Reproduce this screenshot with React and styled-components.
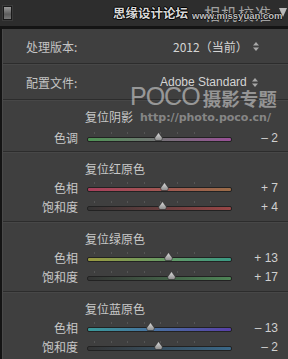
import React from 'react';
import styled, { createGlobalStyle } from 'styled-components';

const GlobalStyle = createGlobalStyle`
  html, body {
    margin: 0;
    padding: 0;
    background: #3f3f3f;
    overflow: hidden;
  }
`;

const FONT = `"Noto Sans CJK SC", "Noto Sans", "Liberation Sans", sans-serif`;

// 面板外框

const Panel = styled.div`
  position: relative;
  width: 288px;
  height: 359px;
  overflow: hidden;
  background: #3f3f3f;
  font-family: ${FONT};
  color: #c9c9c9;
`;

const Header = styled.div`
  height: 26px;
  background: #2d2d2d;
  border-bottom: 3px solid #141414;
  display: flex;
  align-items: center;
  padding-left: 3px;
  position: relative;
`;

const Toggle = styled.div`
  width: 7px;
  height: 12px;
  border: 1px solid #1a1a1a;
  background: linear-gradient(#9a9a9a, #5c5c5c 60%, #777);
  box-shadow: 0 0 0 1px #3a3a3a;
`;

const SiteMark = styled.div`
  position: absolute;
  left: 113px;
  top: 5px;
  font-size: 12.5px;
  line-height: 16px;
  font-weight: 700;
  color: #d8d8d8;
  white-space: nowrap;
  text-shadow: -1px 0 #000, 1px 0 #000, 0 -1px #000, 0 1px #000;
`;

const PanelTitle = styled.div`
  position: absolute;
  left: 204px;
  top: 2px;
  font-size: 16px;
  line-height: 22px;
  color: #a0a0a0;
  letter-spacing: 1px;
  white-space: nowrap;
`;

const SiteUrl = styled.div`
  position: absolute;
  left: 192px;
  top: 10px;
  font-family: "Liberation Sans", sans-serif;
  font-size: 9.5px;
  line-height: 11px;
  font-weight: 700;
  color: #bdbdbd;
  white-space: nowrap;
  text-shadow: -1px 0 #111, 1px 0 #111, 0 -1px #111, 0 1px #111;
`;

const Arrow = styled.div`
  position: absolute;
  right: 1px;
  top: 8px;
  width: 0;
  height: 0;
  border-left: 4px solid transparent;
  border-right: 4px solid transparent;
  border-top: 9px solid #b8b8b8;
`;

const Body = styled.div`
  border-left: 2px solid #141414;
  box-shadow: inset 1px 0 0 #4a4a4a;
`;

const Divider = styled.div`
  height: 1px;
  background: #2c2c2c;
  border-bottom: 1px solid #474747;
  margin-left: 1px;
`;

// 设置行

const SettingRow = styled.div`
  height: ${p => p.$h}px;
  display: flex;
  align-items: center;
  padding-left: 24px;
  font-size: 12px;
`;

const SettingLabel = styled.div`
  width: ${p => p.$w}px;
  color: #c4c4c4;
`;

const SettingValue = styled.div`
  display: flex;
  align-items: center;
  gap: 5px;
  color: #d4d4d4;
  font-family: ${p => (p.$latin ? `"Liberation Sans", sans-serif` : FONT)};
`;

const Stepper = styled.svg`
  width: 6px;
  height: 9px;
  flex: none;
`;

// 滑块组

const Group = styled.div`
  padding: 7px 0 ${p => p.$pb}px;
`;

const GroupTitle = styled.div`
  height: 18px;
  line-height: 18px;
  padding-left: 83px;
  font-size: 12px;
  color: #c8c8c8;
`;

const SliderRow = styled.div`
  height: 19px;
  display: grid;
  grid-template-columns: 76px 145px 1fr;
  column-gap: 9px;
  align-items: center;
  margin-top: ${p => p.$mt || 0}px;
`;

const RowLabel = styled.div`
  text-align: right;
  font-size: 12px;
  color: #c8c8c8;
`;

const Track = styled.div`
  position: relative;
  height: 3px;
  border: 1px solid #222;
  border-radius: 2px;
  background: linear-gradient(to right, ${p => p.$from}, ${p => p.$to});
  margin-top: 3px;
`;

const Ticks = styled.div`
  position: absolute;
  left: 6px;
  right: 6px;
  top: -6px;
  height: 2px;
  background: repeating-linear-gradient(
    to right,
    #555 0 1px,
    transparent 1px 16.6px
  );
`;

const Thumb = styled.svg`
  position: absolute;
  top: -6px;
  width: 9px;
  height: 9px;
  margin-left: -4.5px;
`;

const Value = styled.div`
  text-align: right;
  padding-right: 10px;
  font-family: "Liberation Sans", sans-serif;
  font-size: 12px;
  color: #d0d0d0;
  white-space: pre;
`;

// 水印

const Watermark = styled.div`
  position: absolute;
  left: 130px;
  top: 84px;
  pointer-events: none;
  white-space: nowrap;
`;

const PocoLine = styled.div`
  display: flex;
  align-items: center;
  gap: 3px;
  height: 24px;
`;

const PocoWord = styled.span`
  font-family: "Liberation Sans", sans-serif;
  font-size: 25px;
  line-height: 24px;
  letter-spacing: -1px;
  color: rgba(230, 230, 230, 0.55);
`;

const PocoTitle = styled.span`
  font-size: 18.5px;
  font-weight: 700;
  line-height: 24px;
  margin-top: 4px;
  color: rgba(235, 235, 235, 0.5);
`;

const PocoUrl = styled.div`
  margin-left: 10px;
  margin-top: 4px;
  font-family: "DejaVu Sans", sans-serif;
  font-weight: 700;
  font-size: 11px;
  line-height: 12px;
  color: rgba(225, 225, 225, 0.45);
`;

const StepperIcon = () => (
  <Stepper viewBox="0 0 6 9">
    <path d="M3 0 L6 3.5 H0 Z" fill="#a8a8a8" />
    <path d="M3 9 L6 5.5 H0 Z" fill="#a8a8a8" />
  </Stepper>
);

const Slider = ({ label, value, from, to, mt }) => {
  const pct = 50 + value / 2;
  const sign = value > 0 ? '+' : value < 0 ? '–' : '';
  return (
    <SliderRow $mt={mt}>
      <RowLabel>{label}</RowLabel>
      <Track $from={from} $to={to}>
        <Ticks />
        <Thumb viewBox="0 0 9 9" style={{ left: `${pct}%` }}>
          <defs>
            <linearGradient id="tg" x1="0" y1="0" x2="0" y2="1">
              <stop offset="0" stopColor="#e0e0e0" />
              <stop offset="1" stopColor="#8a8a8a" />
            </linearGradient>
          </defs>
          <path d="M4.5 0.5 L8.5 6 L7.5 8.5 H1.5 L0.5 6 Z" fill="url(#tg)" stroke="#2a2a2a" strokeWidth="0.6" />
        </Thumb>
      </Track>
      <Value>{`${sign} ${Math.abs(value)}`}</Value>
    </SliderRow>
  );
};

const groups = [
  {
    title: '复位红原色',
    rows: [
      { label: '色相', value: 7, from: '#a8405c', to: '#9a6c48' },
      { label: '饱和度', value: 4, from: '#353535', to: '#984646' },
    ],
  },
  {
    title: '复位绿原色',
    rows: [
      { label: '色相', value: 13, from: '#9a9a40', to: '#3a9a84' },
      { label: '饱和度', value: 17, from: '#353535', to: '#4e8456' },
    ],
  },
  {
    title: '复位蓝原色',
    rows: [
      { label: '色相', value: -13, from: '#3a9a9a', to: '#5840a8' },
      { label: '饱和度', value: -2, from: '#353535', to: '#3a6888' },
    ],
  },
];

const App = () => {
  return (
    <Panel>
      <GlobalStyle />
      <Header>
        <Toggle />
        <PanelTitle>相机校准</PanelTitle>
        <SiteMark>思缘设计论坛</SiteMark>
        <SiteUrl>www.missyuan.com</SiteUrl>
        <Arrow />
      </Header>
      <Body>
        <SettingRow $h={34}>
          <SettingLabel $w={147}>处理版本:</SettingLabel>
          <SettingValue>
            2012（当前）
            <StepperIcon />
          </SettingValue>
        </SettingRow>
        <Divider />
        <SettingRow $h={34}>
          <SettingLabel $w={134}>配置文件:</SettingLabel>
          <SettingValue $latin>
            Adobe Standard
            <StepperIcon />
          </SettingValue>
        </SettingRow>
        <Divider />
        <Group $pb={4}>
          <GroupTitle>复位阴影</GroupTitle>
          <Slider label="色调" value={-2} from="#4f9455" to="#985096" mt={2} />
        </Group>
        {groups.map(g => (
          <React.Fragment key={g.title}>
            <Divider />
            <Group $pb={5}>
              <GroupTitle>{g.title}</GroupTitle>
              {g.rows.map(r => (
                <Slider key={r.label} {...r} />
              ))}
            </Group>
          </React.Fragment>
        ))}
      </Body>
      <Watermark>
        <PocoLine>
          <PocoWord>POCO</PocoWord>
          <PocoTitle>摄影专题</PocoTitle>
        </PocoLine>
        <PocoUrl>http://photo.poco.cn/</PocoUrl>
      </Watermark>
    </Panel>
  );
};

export default App;
